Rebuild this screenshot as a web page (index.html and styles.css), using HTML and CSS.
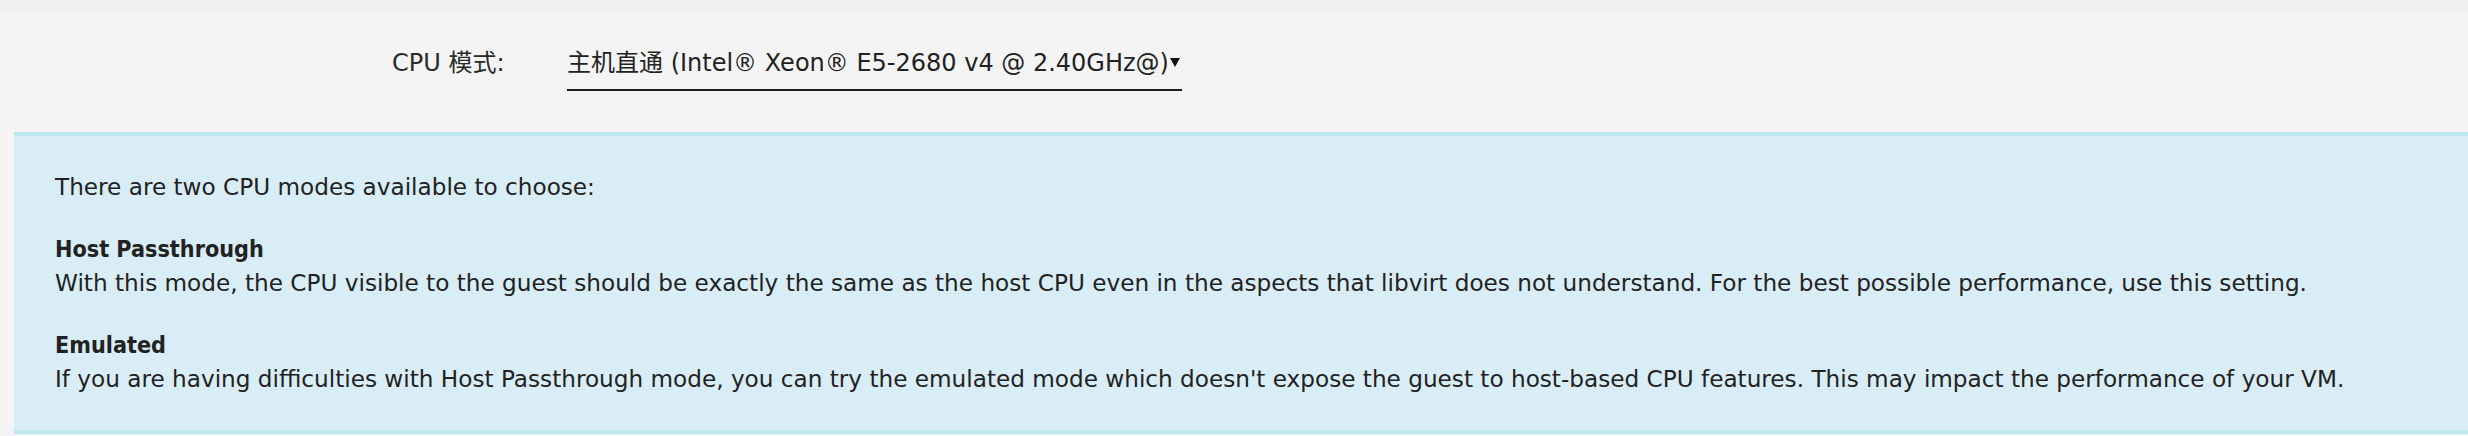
FILE: index.html
```html
<!DOCTYPE html>
<html lang="zh">
<head>
<meta charset="utf-8">
<title>CPU 模式</title>
<link rel="stylesheet" href="styles.css">
</head>
<body>
<div class="topbar"></div>
<div class="form-row">
  <div class="label">CPU 模式:</div>
  <div class="select">
    <div class="select-text">主机直通 (Intel® Xeon® E5-2680 v4 @ 2.40GHz@)</div>
    <div class="select-arrow"><svg width="10" height="9" viewBox="0 0 10 9"><path d="M0 0H10L5 9Z" fill="#111"/></svg></div>
  </div>
</div>
<div class="help">
  <p class="intro">There are two CPU modes available to choose:</p>
  <p class="item"><b>Host Passthrough</b><br>With this mode, the CPU visible to the guest should be exactly the same as the host CPU even in the aspects that libvirt does not understand. For the best possible performance, use this setting.</p>
  <p class="item"><b>Emulated</b><br>If you are having difficulties with Host Passthrough mode, you can try the emulated mode which doesn't expose the guest to host-based CPU features. This may impact the performance of your VM.</p>
</div>
</body>
</html>
```
FILE: styles.css
```css
html, body {
  margin: 0;
  padding: 0;
  background: #f4f4f4;
}
body {
  font-family: "DejaVu Sans", "Noto Sans CJK SC", sans-serif;
  font-size: 23.16px;
  line-height: 34px;
  color: #222;
}
.topbar {
  height: 12px;
  background: #f0f0f0;
}
.form-row {
  display: flex;
  align-items: flex-start;
  padding: 34px 0 0 392px;
  height: 86px;
  font-size: 24px;
}
.label {
  width: 175px;
  color: #2a2a2a;
}
.select {
  display: flex;
  width: 615px;
  padding-bottom: 9px;
  border-bottom: 2px solid #1c1c1c;
}
.select-text {
  width: 600px;
  overflow: hidden;
  white-space: nowrap;
}
.select-arrow {
  width: 15px;
  padding: 12px 0 0 3px;
  box-sizing: border-box;
  line-height: 0;
}
.help {
  margin-left: 14px;
  background: #d9edf6;
  border-top: 4px solid #bce8f1;
  border-bottom: 4px solid #bce8f1;
  padding: 34px 0 34px 41px;
  color: #222;
}
.help p {
  margin: 0;
}
.help p + p {
  margin-top: 28px;
}
.help b {
  font-family: "DejaVu Sans Condensed", "DejaVu Sans", sans-serif;
  font-weight: bold;
}
```
